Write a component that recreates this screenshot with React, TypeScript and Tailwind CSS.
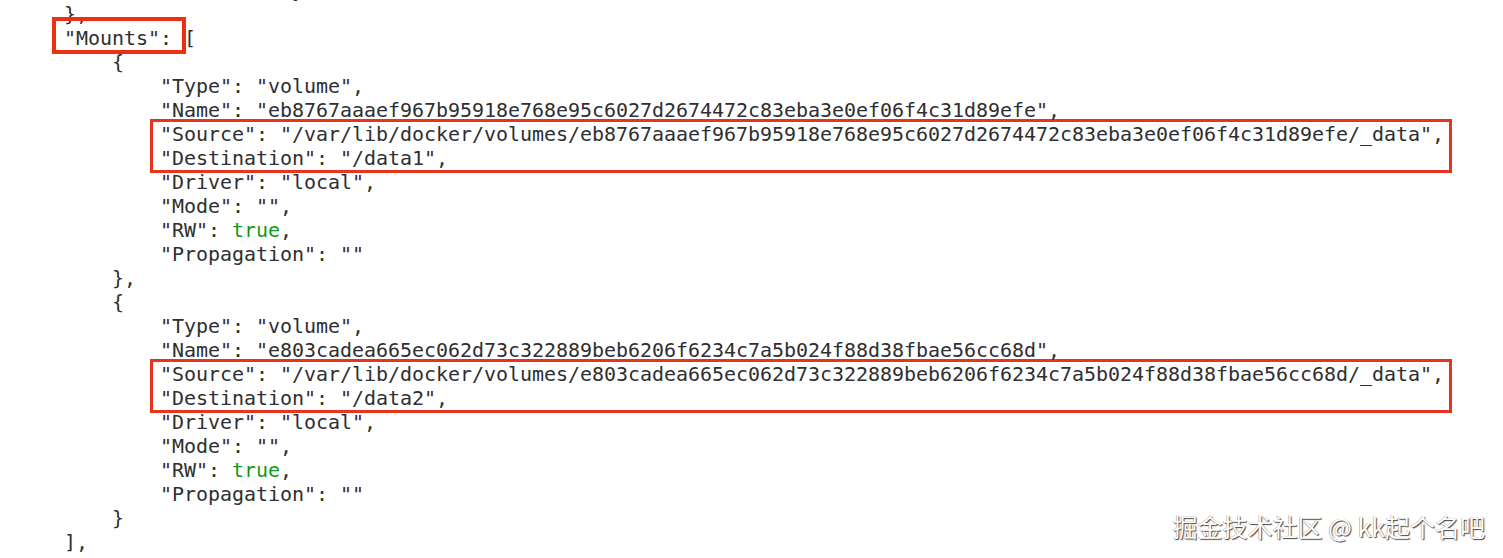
import React from 'react'

const Line = ({ children }: { children?: React.ReactNode }) => (
  <div className="h-[24px] whitespace-pre">{children}</div>
)

const True = () => <span className="text-[#139a13]">true</span>

const Mount = ({ name, last }: { name: string; last?: boolean }) => {
  const hash = name
  const dest = last ? '/data2' : '/data1'
  return (
    <>
      <Line>{'        {'}</Line>
      <Line>{'            "Type": "volume",'}</Line>
      <Line>{`            "Name": "${hash}",`}</Line>
      <div className="-my-[3px] ml-[134px] w-[1302px] border-[3px] border-[#e8341c] pl-[7px]">
        <Line>{`"Source": "/var/lib/docker/volumes/${hash}/_data",`}</Line>
        <Line>{`"Destination": "${dest}",`}</Line>
      </div>
      <Line>{'            "Driver": "local",'}</Line>
      <Line>{'            "Mode": "",'}</Line>
      <Line>
        {'            "RW": '}
        <True />
        {','}
      </Line>
      <Line>{'            "Propagation": ""'}</Line>
      <Line>{last ? '        }' : '        },'}</Line>
    </>
  )
}

const App = () => {
  return (
    <div className="relative h-[558px] w-full overflow-hidden bg-white">
      <div className="-mt-[22px] pl-4 font-['DejaVu_Sans_Mono',monospace] text-[20px] leading-[24px] tracking-[-0.04px] text-[#2f2f2f]">
        <Line>{'        "Name": "overlay2"'}</Line>
        <Line>{'    },'}</Line>
        <Line>
          {'    '}
          <span className="-ml-[12px] -mr-[14px] border-[4px] border-[#ee2f14] pt-[5px] pr-[10px] pl-[8px]">
            "Mounts":
          </span>
          {' ['}
        </Line>
        <Mount name="eb8767aaaef967b95918e768e95c6027d2674472c83eba3e0ef06f4c31d89efe" />
        <Mount name="e803cadea665ec062d73c322889beb6206f6234c7a5b024f88d38fbae56cc68d" last />
        <Line>{'    ],'}</Line>
      </div>

      {/* watermark */}
      <div className="absolute top-[508px] right-[18px] font-['Noto_Sans_CJK_SC','Noto_Sans',sans-serif] text-[25px] leading-[36px] text-white [text-shadow:1px_1px_1px_#444,-0.5px_-0.5px_0_#999]">
        掘金技术社区 @ kk起个名吧
      </div>
    </div>
  )
}

export default App
